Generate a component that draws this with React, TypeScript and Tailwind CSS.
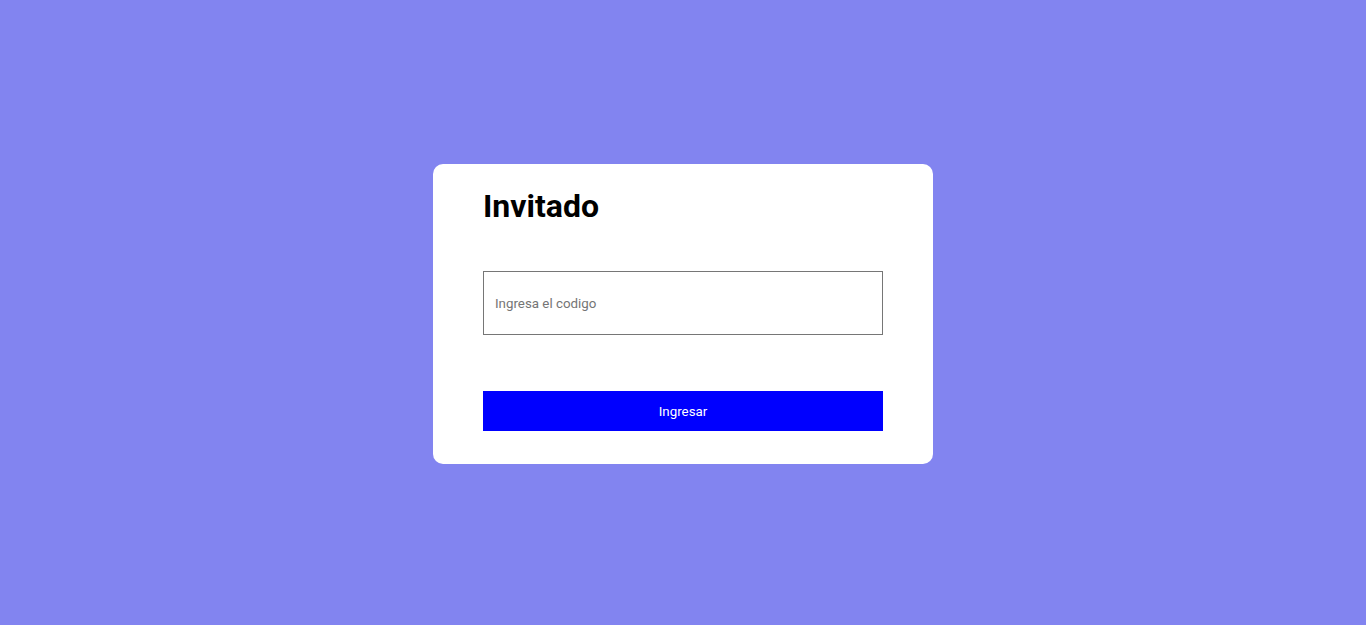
import React from 'react';

const App: React.FC = () => {
  return (
    <div className="min-h-screen w-full bg-[#8284f0] flex items-center justify-center font-['Roboto',sans-serif]">
      {/* Login card */}
      <div className="mt-[2px] w-[500px] h-[300px] bg-white rounded-[10px] px-[50px] pt-[23px] flex flex-col">
        <h1 className="text-[32px] leading-[38px] font-bold text-black">Invitado</h1>

        <input
          type="text"
          placeholder="Ingresa el codigo"
          className="mt-[46px] w-full h-[64px] border border-[#767676] px-[11px] pt-[2px] text-[13.333px] text-black placeholder:text-[#757575] outline-none"
        />

        <button className="mt-[56px] w-full h-[40px] pt-[2px] bg-[#0000ff] text-white text-[13.333px]">
          Ingresar
        </button>
      </div>
    </div>
  );
};

export default App;
